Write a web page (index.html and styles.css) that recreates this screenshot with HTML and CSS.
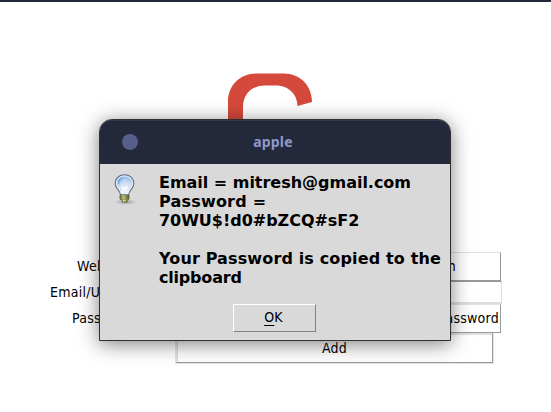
FILE: index.html
```html
<!DOCTYPE html>
<html lang="en">
<head>
<meta charset="utf-8">
<title>Password Manager</title>
<link rel="stylesheet" href="styles.css">
</head>
<body>
<main class="app">
  <svg class="logo" width="100" height="100" viewBox="0 0 100 100" aria-hidden="true">
    <path d="M0 100V28.500C0 12.500 12 .5 28 .5H56C72 .5 84 12.500 84 29L69.500 33C69.500 21 60 12.500 48 12.500H37C24 12.500 15 21 15 34V100Z" fill="#d5493c"/>
  </svg>
  <form class="form">
    <div class="row row-website">
      <span class="label">Website:</span>
      <span class="entry"></span>
      <span class="button button-side">Search</span>
    </div>
    <div class="row row-email">
      <span class="label">Email/Username:</span>
      <span class="entry"></span>
    </div>
    <div class="row row-password">
      <span class="label">Password:</span>
      <span class="entry"></span>
      <span class="button button-generate">Generate Password</span>
    </div>
    <div class="button button-add">Add</div>
  </form>
</main>
<section class="dialog" role="dialog" aria-label="apple">
  <header class="titlebar"><span class="close"></span><h1 class="title">apple</h1></header>
  <div class="content">
    <svg class="bulb" width="24" height="32" viewBox="0 0 24 32" aria-hidden="true">
      <defs>
        <radialGradient id="glass" cx=".55" cy=".7" r=".7"><stop offset="0" stop-color="#f2f6f8"/><stop offset=".5" stop-color="#cbdcf0"/><stop offset="1" stop-color="#83aee8"/></radialGradient>
        <radialGradient id="shade"><stop offset="0" stop-color="#777" stop-opacity=".8"/><stop offset="1" stop-color="#999" stop-opacity="0"/></radialGradient>
        <linearGradient id="brass"><stop offset="0" stop-color="#77773b"/><stop offset=".4" stop-color="#efeead"/><stop offset="1" stop-color="#55552b"/></linearGradient>
      </defs>
      <ellipse cx="12.500" cy="28" rx="11" ry="3" fill="url(#shade)"/>
      <path d="M7.500 21C7.500 16 2.200 15 2.200 9.500C2.200 4 6 .8 11.500 .8S20.800 4 20.800 9.500C20.800 15 15.500 16 15.500 21Z" fill="url(#glass)" stroke="#6c7683" stroke-width="1.200"/>
      <path d="M8.500 20C8.300 15.500 3.500 14 3.500 9.500C3.500 5 7 2 11.500 2S19.500 5 19.500 9.500C19.500 14 14.700 15.500 14.500 20" fill="none" stroke="#f4f8fd" stroke-width="1"/>
      <path d="M5 9C5 5 8 3.500 11 3.500C8 5 6.500 7 6 11Z" fill="#79a9eb"/>
      <path d="M10 20V15L8.500 13L11.500 14.500L14.500 12.500L13 15V20" fill="none" stroke="#fff" stroke-width="1"/>
      <path d="M7 21H16V25L14 26.500V28H9.500V26.500L7 25Z" fill="url(#brass)" stroke="#5b5b34" stroke-width=".8"/>
      <path d="M7 23.500L16 22.500M8 25.500L15.500 24.500" stroke="#66662f" stroke-width=".8"/>
    </svg>
    <p class="message"><span class="line-email">Email = mitresh@gmail.com</span><br><span class="line-label">Password =</span><br><span class="line-email">70WU$!d0#bZCQ#sF2</span><br><br><span class="line-notice">Your Password is copied to the</span><br><span class="line-end">clipboard</span></p>
  </div>
  <div class="ok"><span class="mnemonic">O</span>K</div>
</section>
</body>
</html>
```
FILE: styles.css
```css
* { box-sizing: border-box; }
body {
  margin: 0;
  width: 551px;
  height: 412px;
  overflow: hidden;
  background: #fff;
  color: #000;
  font: 14px/16px "DejaVu Sans Condensed", "DejaVu Sans", sans-serif;
  font-stretch: condensed;
  letter-spacing: .25px;
}
.app {
  height: 412px;
  border-top: 2px solid #24283b;
  padding: 71px 50px 0;
}
.logo { display: block; margin-left: 178px; }
.form { margin-top: 79px; white-space: nowrap; }
.row { display: flex; align-items: center; width: 451px; }
.row-website { height: 29px; }
.row-email { height: 23px; }
.row-password { height: 29px; }
.label {
  display: flex;
  justify-content: flex-start;
  width: 107px;
  flex: none;
  padding-bottom: 2px;
}
.row-website .label { padding-left: 27px; }
.row-password .label { padding-left: 22px; }
.entry {
  flex: 1;
  height: 23px;
  margin-left: 20px;
  border: 2px solid;
  border-color: #999 #ddd #ddd #999;
  background: #fff;
}
.row-email .entry {
  border-width: 1px 1px 2px;
  margin-right: -1px;
}
.button {
  display: flex;
  align-items: center;
  justify-content: center;
  height: 29px;
  border: 1px solid;
  border-color: #e2e2e2 #999 #999 #e2e2e2;
  background: #fff;
}
.button-side { width: 129px; padding: 0 6px 2px 0; }
.button-generate {
  width: 129px;
  justify-content: flex-end;
  padding: 0 1px 2px 0;
}
.button-add {
  width: 317px;
  height: 30px;
  margin-left: 126px;
  box-shadow: inset 1px 1px #ddd, 0 0 0 1px #e4e4e4;
}
.dialog {
  position: absolute;
  left: 99px;
  top: 119px;
  width: 352px;
  height: 222px;
  border: 1px solid #303030;
  border-radius: 13px 13px 0 0;
  background: #d9d9d9;
  box-shadow: 0 3px 20px rgba(0, 0, 0, .5);
}
.titlebar {
  display: flex;
  align-items: center;
  height: 44px;
  padding-left: 22px;
  border-radius: 12px 12px 0 0;
  background: #24283b;
  box-shadow: inset 0 1px #343849;
}
.close { width: 16px; height: 16px; border-radius: 50%; background: #565f89; }
.title {
  flex: 1;
  margin: 0 42px 0 0;
  color: #9099c7;
  font: bold 14px/20px "Noto Sans", sans-serif;
  letter-spacing: .2px;
  text-align: center;
}
.content { display: flex; height: 140px; padding: 9px 0 0 13px; }
.bulb { margin-top: 1px; flex: none; }
.message {
  margin: 0 0 0 22px;
  font: bold 16px/19px "DejaVu Sans", sans-serif;
  white-space: nowrap;
}
.line-email { letter-spacing: -.02px; }
.line-label { letter-spacing: .2px; }
.line-notice { letter-spacing: .14px; }
.line-end { letter-spacing: -.2px; }
.ok {
  width: 83px;
  height: 28px;
  margin-left: 133px;
  padding-right: 2px;
  border: 1px solid;
  border-color: #fff #828282 #828282 #fff;
  text-align: center;
  line-height: 24px;
}
.mnemonic { text-decoration: underline; text-underline-offset: 3px; }
```
